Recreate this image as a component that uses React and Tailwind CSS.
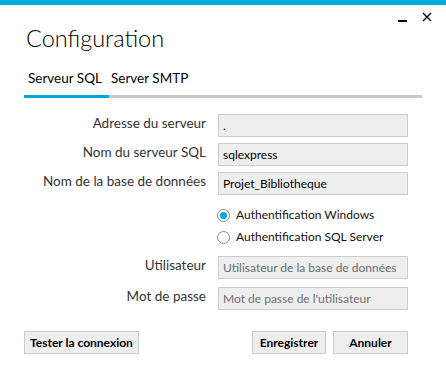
import React from "react";

const font = { fontFamily: 'Lato, "Open Sans", sans-serif' };

function Row({ label, value, placeholder }) {
  return (
    <div className="flex items-center h-[23px]">
      <div className="w-[183px] pr-[1px] text-right text-[13.5px] leading-none text-[#333] -mt-[3px] whitespace-nowrap">{label}</div>
      <div className="ml-[11px] w-[190px] h-[23px] bg-[#eeeeee] border border-[#cccccc] flex items-center px-[4px] text-[12px] leading-none whitespace-nowrap">
        {value ? <span className="text-black">{value}</span> : <span className="text-[#6d6d6d]">{placeholder}</span>}
      </div>
    </div>
  );
}

function Radio({ checked, label }) {
  return (
    <div className="flex items-center h-[20px]">
      <div className="w-[13px] h-[13px] rounded-full border border-[#8a8a8a] bg-white flex items-center justify-center">
        {checked && <div className="w-[7px] h-[7px] rounded-full bg-[#00a8de]" />}
      </div>
      <span className="ml-[6px] text-[12px] leading-none text-[#111] whitespace-nowrap">{label}</span>
    </div>
  );
}

const btn = "h-[23px] bg-[#eeeeee] border border-[#cccccc] text-[12px] font-bold leading-none text-black whitespace-nowrap";

export default function App() {
  return (
    <div className="w-[446px] h-[367px] bg-white relative overflow-hidden" style={font}>
      <div className="h-[5px] bg-[#00acdc]" />
      <div className="absolute top-[12px] right-[14px] flex items-center gap-[15px]">
        <div className="w-[9px] h-[2px] bg-black mt-[7px]" />
        <svg width="10" height="10" viewBox="0 0 10 10">
          <path d="M1 1 L9 9 M9 1 L1 9" stroke="#000" strokeWidth="1.4" />
        </svg>
      </div>
      <div className="px-[24px]">
        <div className="pt-[16px] pl-[2px] text-[23.5px] leading-[34px] font-light text-black">Configuration</div>
        <div className="mt-[14px] flex text-[13.5px] leading-[18px] text-black">
          <div className="pl-[4px] w-[85px] whitespace-nowrap">Serveur SQL</div>
          <div className="pl-[2px] whitespace-nowrap">Server SMTP</div>
        </div>
        <div className="mt-[8px] flex h-[3px] w-[398px]">
          <div className="w-[85px] bg-[#00a8d8]" />
          <div className="flex-1 bg-[#c8c8c8]" />
        </div>
        <div className="mt-[16px] flex flex-col gap-[6px]">
          <Row label="Adresse du serveur" value="." />
          <Row label="Nom du serveur SQL" value="sqlexpress" />
          <Row label="Nom de la base de données" value="Projet_Bibliotheque" />
        </div>
        <div className="mt-[10px] ml-[193px] flex flex-col gap-[2px]">
          <Radio checked label="Authentification Windows" />
          <Radio label="Authentification SQL Server" />
        </div>
        <div className="mt-[9px] flex flex-col gap-[8px]">
          <Row label="Utilisateur" placeholder="Utilisateur de la base de données" />
          <Row label="Mot de passe" placeholder="Mot de passe de l'utilisateur" />
        </div>
        <div className="mt-[21px] flex items-center">
          <button className={`w-[115px] ${btn}`}>Tester la connexion</button>
          <div className="flex-1" />
          <button className={`w-[74px] ${btn}`}>Enregistrer</button>
          <button className={`ml-[7px] mr-[14px] w-[75px] ${btn}`}>Annuler</button>
        </div>
      </div>
    </div>
  );
}
